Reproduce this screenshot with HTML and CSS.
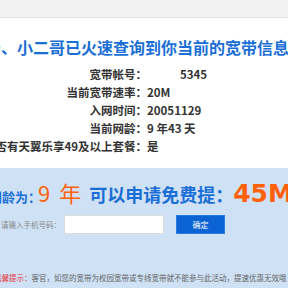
FILE: index.html
```html
<!DOCTYPE html>
<html lang="zh">
<head>
<meta charset="utf-8">
<link rel="stylesheet" href="styles.css">
</head>
<body>
<div class="topbar"></div>
<h1 class="title">亲、小二哥已火速查询到你当前的宽带信息</h1>
<div class="info">
  <div class="label">宽带帐号：</div><div class="value account">5345</div>
  <div class="label">当前宽带速率：</div><div class="value">20M</div>
  <div class="label">入网时间：</div><div class="value">20051129</div>
  <div class="label">当前网龄：</div><div class="value">9 年43 天</div>
  <div class="label">是否有天翼乐享49及以上套餐：</div><div class="value">是</div>
</div>
<section class="offer">
  <div class="headline">
    <span class="hl-label">网龄为：</span><span class="hl-num years">9 年</span><span class="hl-text">可以申请免费提：</span><span class="hl-num speed">45M</span>
  </div>
  <form class="phone-row">
    <label class="phone-label">请输入手机号码：</label>
    <input class="phone-input" type="text">
    <button class="confirm" type="button">确定</button>
  </form>
  <p class="tip"><span class="tip-title">温馨提示：</span>客官，如您的宽带为校园宽带或专线宽带就不能参与此活动，提速优惠无效哦</p>
</section>
</body>
</html>
```
FILE: styles.css
```css
html, body {
  margin: 0;
  padding: 0;
}
body {
  width: 288px;
  height: 288px;
  overflow: hidden;
  background: #fff;
  font-family: "Noto Sans CJK SC", "Noto Sans", sans-serif;
  color: #333;
}
.topbar {
  height: 17px;
  background: #f2f2f2;
  border-bottom: 1px solid #dedede;
}
.title {
  margin: 19px 0 0 -15px;
  font-size: 16px;
  line-height: 20px;
  font-weight: 700;
  color: #1a6fd6;
  white-space: nowrap;
}
.info {
  display: grid;
  grid-template-columns: 207px auto;
  margin: 8px 0 0 -60px;
  font-size: 11.5px;
  line-height: 18px;
  font-weight: 700;
  color: #333;
}
.label {
  text-align: right;
  white-space: nowrap;
}
.value {
  white-space: nowrap;
}
.value.account {
  padding-left: 33px;
}
.offer {
  margin-top: 13px;
  background: #cfe1f5;
  padding: 9px 0 10px 0;
  height: 200px;
}
.headline {
  display: flex;
  align-items: baseline;
  white-space: nowrap;
  height: 30px;
  line-height: 30px;
  margin-left: -11px;
}
.hl-label {
  font-size: 13px;
  font-weight: 700;
  color: #1a6fd6;
}
.hl-num {
  color: #ff600a;
}
.years {
  font-size: 22px;
  margin-left: -3px;
  word-spacing: 4px;
}
.hl-text {
  font-size: 18px;
  font-weight: 700;
  color: #1a6fd6;
  margin-left: 8px;
}
.speed {
  font-family: "DejaVu Sans", sans-serif;
  font-size: 25px;
  font-weight: 700;
}
.phone-row {
  display: flex;
  align-items: center;
  margin: 8px 0 0 0;
  height: 19px;
}
.phone-label {
  font-size: 7.5px;
  color: #888;
  width: 63px;
  padding-left: 1px;
  white-space: nowrap;
}
.phone-input {
  box-sizing: border-box;
  width: 100px;
  height: 19px;
  margin: 0;
  border: 1px solid #dcdcdc;
  background: #fff;
  padding: 0;
}
.confirm {
  box-sizing: border-box;
  width: 49px;
  height: 19px;
  margin: 0 0 0 12px;
  border: 1px solid #2b7be0;
  background: #0c63d4;
  color: #fff;
  font-family: "Noto Sans CJK SC", sans-serif;
  font-size: 8px;
  padding: 0;
}
.tip {
  margin: 38px 0 0 -6px;
  font-size: 7.5px;
  line-height: 12px;
  color: #666;
  white-space: nowrap;
}
.tip-title {
  color: #e8343a;
}
```
